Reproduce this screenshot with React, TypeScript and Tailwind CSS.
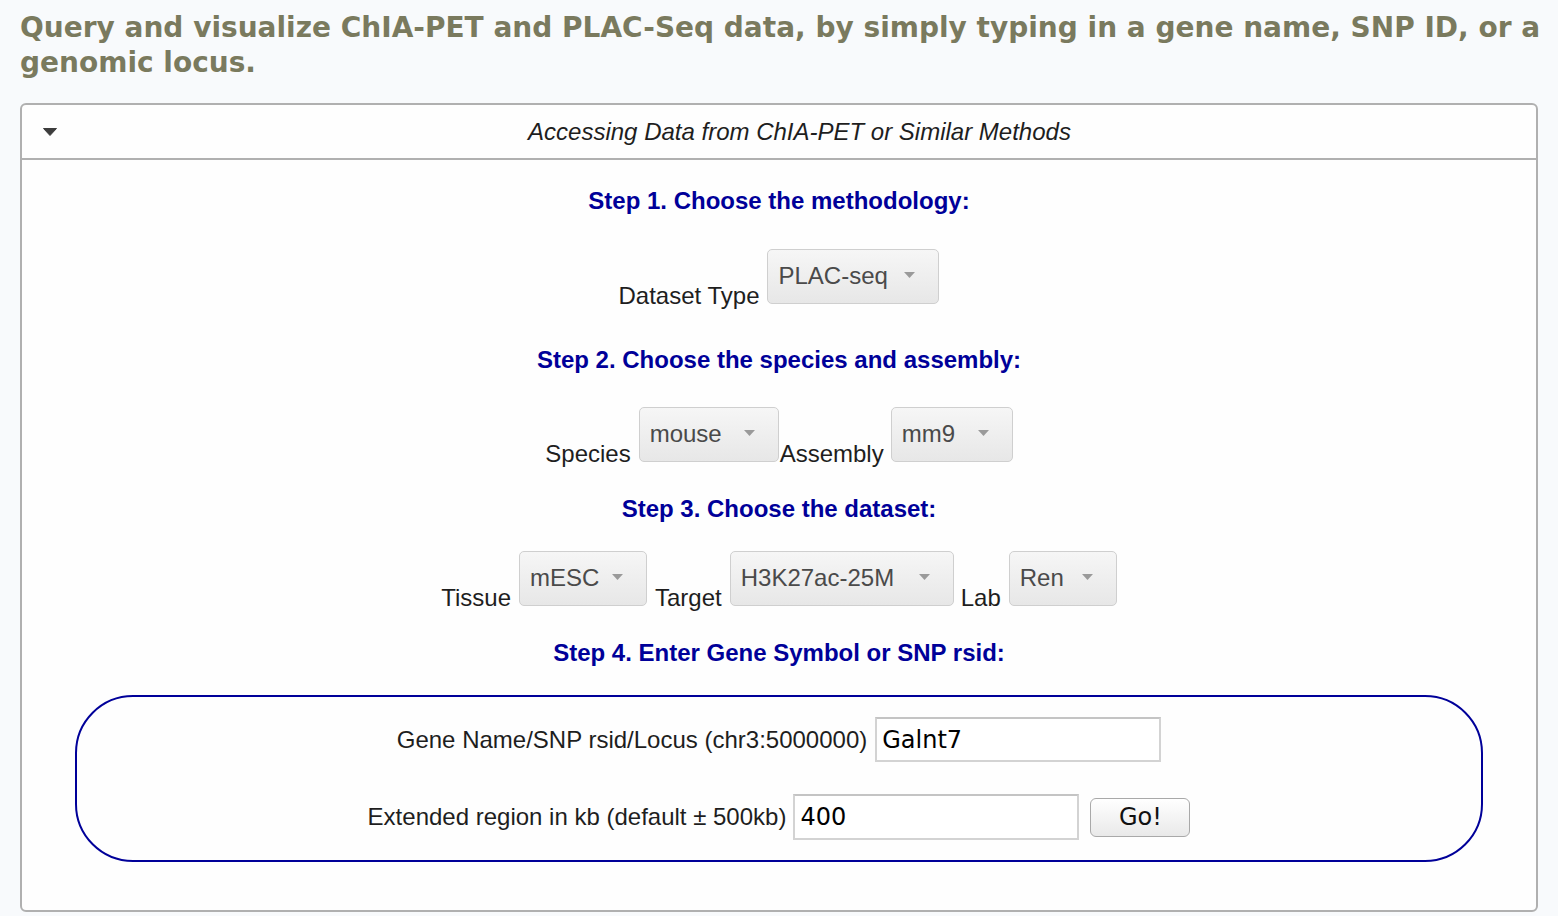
import React from "react";

const arial = { fontFamily: '"Liberation Sans", Arial, sans-serif' };
const verdana = { fontFamily: '"DejaVu Sans", Verdana, sans-serif' };

function Arrow() {
  return (
    <svg width="11" height="6" viewBox="0 0 11 6" className="block">
      <polygon points="0,0 11,0 5.5,6" fill="#9a9a9a" />
    </svg>
  );
}

function FakeSelect({ value, w }: { value: string; w: string }) {
  return (
    <div
      className={`${w} h-[55px] shrink-0 rounded-[5px] border border-[#cfcfcf] bg-gradient-to-b from-[#f6f6f6] to-[#e7e7e7] flex items-start pl-[10px] pr-[23px] pt-[12px]`}
    >
      <span className="text-[24px] leading-[28px] text-[#4a4a4a]" style={arial}>
        {value}
      </span>
      <span className="ml-auto mt-[10px]">
        <Arrow />
      </span>
    </div>
  );
}

function Label({ children, cls = "" }: { children: React.ReactNode; cls?: string }) {
  return (
    <span className={`text-[24px] leading-[28px] text-[#1e1e1e] mb-[-6px] whitespace-nowrap ${cls}`} style={arial}>
      {children}
    </span>
  );
}

function Heading({ children, cls }: { children: React.ReactNode; cls: string }) {
  return (
    <div className={`text-center text-[24px] leading-[32px] font-bold text-[#000099] ${cls}`} style={arial}>
      {children}
    </div>
  );
}

export default function App() {
  return (
    <div className="min-h-[916px] bg-[#f8fafc] px-[20px] pt-[10px] pb-[5px]">
      <h1
        className="text-[28px] leading-[35px] font-bold text-[#7a7a5e] whitespace-nowrap"
        style={verdana}
      >
        Query and visualize ChIA-PET and PLAC-Seq data, by simply typing in a gene name, SNP ID, or a
        <br />
        genomic locus.
      </h1>

      <div className="mt-[23px] border-2 border-[#b0b0b0] rounded-[6px] bg-[#fefefe]">
        <div className="h-[55px] flex items-center border-b-2 border-[#b0b0b0]">
          <svg width="14" height="8" viewBox="0 0 14 8" className="ml-[21px] shrink-0">
            <polygon points="0.5,0.5 13.5,0.5 7,7.5" fill="#3c3c3c" stroke="#3c3c3c" strokeLinejoin="round" />
          </svg>
          <div
            className="flex-1 ml-[6px] text-center italic text-[24px] leading-[28px] text-[#1e1e1e]"
            style={arial}
          >
            Accessing Data from ChIA-PET or Similar Methods
          </div>
        </div>

        <div className="pt-[25px] pb-[48px]">
          <Heading cls="">Step 1. Choose the methodology:</Heading>
          <div className="mt-[32px] flex justify-center items-end">
            <Label cls="mr-[8px]">Dataset Type</Label>
            <FakeSelect value="PLAC-seq" w="w-[172px]" />
          </div>

          <Heading cls="mt-[40px]">Step 2. Choose the species and assembly:</Heading>
          <div className="mt-[31px] flex justify-center items-end">
            <Label cls="mr-[8px]">Species</Label>
            <FakeSelect value="mouse" w="w-[140px]" />
            <Label cls="ml-[1px] mr-[7px]">Assembly</Label>
            <FakeSelect value="mm9" w="w-[122px]" />
          </div>

          <Heading cls="mt-[31px]">Step 3. Choose the dataset:</Heading>
          <div className="mt-[26px] flex justify-center items-end">
            <Label cls="mr-[8px]">Tissue</Label>
            <FakeSelect value="mESC" w="w-[128px]" />
            <Label cls="ml-[8px] mr-[8px]">Target</Label>
            <FakeSelect value="H3K27ac-25M" w="w-[224px]" />
            <Label cls="ml-[7px] mr-[8px]">Lab</Label>
            <FakeSelect value="Ren" w="w-[108px]" />
          </div>

          <Heading cls="mt-[31px]">Step 4. Enter Gene Symbol or SNP rsid:</Heading>

          <div className="mt-[26px] mx-[53px] border-2 border-[#000099] rounded-[58px] pt-[20px] pb-[20px] flex flex-col items-center">
            <div className="flex items-center">
              <span className="text-[24px] leading-[28px] text-[#1e1e1e] mr-[8px]" style={arial}>
                Gene Name/SNP rsid/Locus (chr3:5000000)
              </span>
              <input
                readOnly
                value="Galnt7"
                className="w-[286px] h-[45px] border-2 border-[#d3d3d3] border-t-[#c4c4c4] bg-white px-[5px] text-[24px] text-black outline-none"
                style={verdana}
              />
            </div>
            <div className="mt-[32px] flex items-center">
              <span className="text-[24px] leading-[28px] text-[#1e1e1e] mr-[7px]" style={arial}>
                Extended region in kb (default ± 500kb)
              </span>
              <input
                readOnly
                value="400"
                className="w-[286px] h-[46px] border-2 border-[#d3d3d3] border-t-[#c4c4c4] bg-white px-[5px] text-[24px] text-black outline-none"
                style={verdana}
              />
              <button
                className="ml-[11px] w-[100px] h-[39px] rounded-[6px] border border-[#a9a9a9] bg-gradient-to-b from-[#ffffff] to-[#e9e9e9] text-[24px] leading-[28px] text-[#111]"
                style={verdana}
              >
                Go!
              </button>
            </div>
          </div>
        </div>
      </div>
    </div>
  );
}
